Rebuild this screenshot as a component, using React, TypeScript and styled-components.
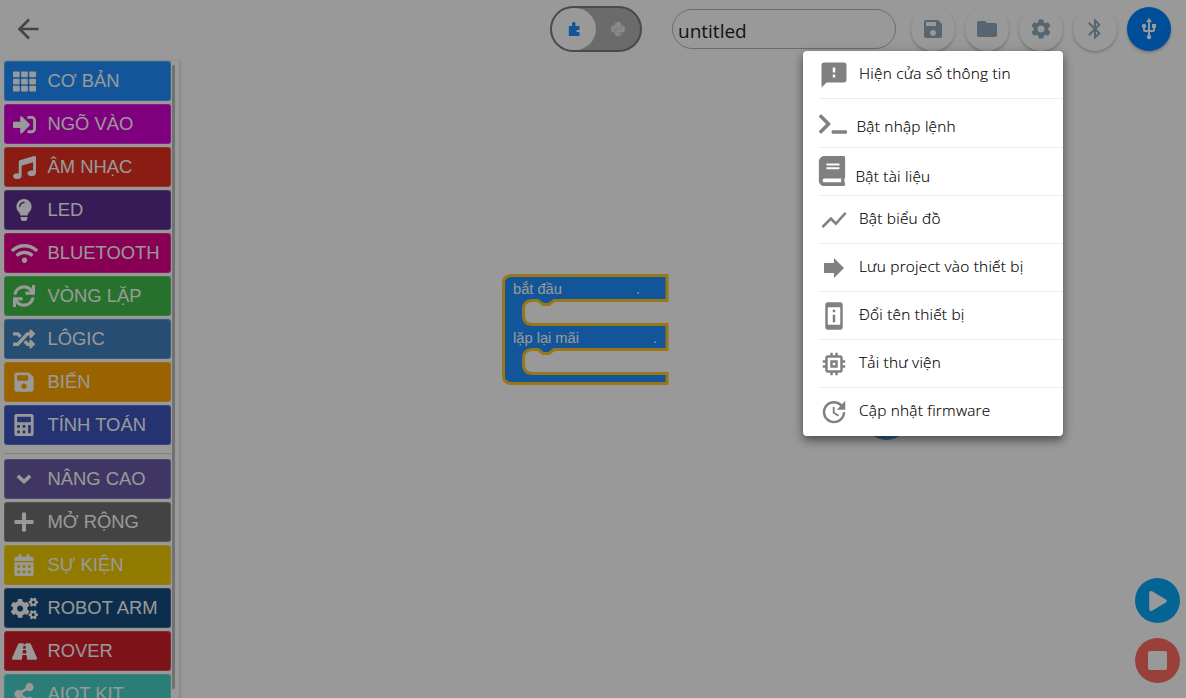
import React from "react";
import styled, { createGlobalStyle } from "styled-components";
import { FaTh, FaSignInAlt, FaMusic, FaLightbulb, FaWifi, FaSync, FaRandom, FaSave, FaCalculator, FaPlus, FaCalendarAlt, FaCogs, FaRoad, FaShareAlt, FaPython, FaTerminal, FaBook, FaPlay } from "react-icons/fa";
import { MdSave, MdFolder, MdSettings, MdBluetooth, MdUsb, MdShowChart, MdForward, MdPermDeviceInformation, MdMemory, MdUpdate } from "react-icons/md";

const Global = createGlobalStyle`
  * { box-sizing: border-box; }
  body { margin: 0; overflow: hidden; background: #fff; }
`;

const Page = styled.div`
  position: relative;
  width: 1186px;
  height: 698px;
  overflow: hidden;
  background: #fff;
  display: flex;
  flex-direction: column;
  font-family: "Liberation Sans", sans-serif;
`;

const TopBar = styled.header`
  height: 61px;
  flex: none;
  display: flex;
  align-items: flex-start;
  padding: 6px 15px 0 14px;
`;

const BackButton = styled.div`
  margin-top: 9px;
  height: 28px;
  color: #747474;
  flex: 1;
  svg { display: block; }
`;

const ModeSwitch = styled.div`
  width: 92px;
  height: 46px;
  border: 2px solid #7c7c7c;
  border-radius: 23px;
  background: #b2b2b2;
  display: flex;
  margin-right: 30px;
  overflow: hidden;
`;

const Mode = styled.div<{ $active?: boolean }>`
  width: 44px;
  height: 42px;
  border-radius: ${(p) => (p.$active ? "21px 22px 22px 21px" : "0")};
  background: ${(p) => (p.$active ? "#fff" : "transparent")};
  color: ${(p) => (p.$active ? "#1e90ff" : "#e6e6e6")};
  display: flex;
  align-items: center;
  justify-content: center;
`;

const NameField = styled.div`
  width: 224px;
  height: 40px;
  margin: 3px 15px 0 0;
  border: 1px solid #9dbdd2;
  border-radius: 20px;
  padding: 3px 0 0 5px;
  font: 400 19px/36px "Open Sans", "Noto Sans", sans-serif;
  color: #222;
`;

const Tools = styled.div`
  display: flex;
  gap: 10px;
  margin-top: 1px;
`;

const RoundButton = styled.div<{ $primary?: boolean }>`
  width: 44px;
  height: 44px;
  border-radius: 50%;
  display: flex;
  align-items: center;
  justify-content: center;
  background: ${(p) => (p.$primary ? "#0080ff" : "#fff")};
  color: ${(p) => (p.$primary ? "#fff" : "#8fa9b9")};
  box-shadow: 0 1.5px 3px rgba(0, 0, 0, 0.26);
`;

const Main = styled.main`
  flex: 1;
  min-height: 0;
  display: flex;
`;

const Sidebar = styled.nav`
  width: 180px;
  display: flex;
  overflow: hidden;
  border-right: 1px solid #e4e4e4;
  box-shadow: 1px 0 3px rgba(0, 0, 0, 0.12);
`;

const CategoryList = styled.div`
  width: 167px;
  margin-left: 4px;
  display: flex;
  flex-direction: column;
  gap: 3px;
`;

const Category = styled.div<{ $color: string }>`
  height: 40px;
  flex: none;
  border-radius: 3px;
  border: 1px solid rgba(255, 255, 255, 0.2);
  background: ${(p) => p.$color};
  color: #fff;
  display: flex;
  align-items: center;
  font-size: 18.4px;
  white-space: nowrap;
`;

const CategoryIcon = styled.span`
  width: 38px;
  display: flex;
  justify-content: center;
  margin-right: 4.5px;
`;

const Divider = styled.div`
  height: 1px;
  flex: none;
  margin: 5px 0 2px;
  background: #d8d8d8;
`;

const Scrollbar = styled.div`
  width: 3px;
  height: 624px;
  margin: 4px 0 0 1px;
  border-radius: 1px;
  background: #bebebe;
`;

const Workspace = styled.section`
  flex: 1;
  position: relative;
`;

const ProgramBlock = styled.svg`
  position: absolute;
  left: 320px;
  top: 211px;
`;

const HiddenBubble = styled.div`
  position: absolute;
  left: 684px;
  top: 334px;
  width: 45px;
  height: 45px;
  border-radius: 50%;
  background: #4ba3d3;
`;

const RunControls = styled.div`
  position: absolute;
  right: 6px;
  top: 517px;
  display: flex;
  flex-direction: column;
  gap: 15px;
`;

const RunButton = styled.div<{ $color: string }>`
  width: 45px;
  height: 45px;
  border-radius: 50%;
  background: ${(p) => p.$color};
  color: #fff;
  display: flex;
  align-items: center;
  justify-content: center;
`;

const StopSquare = styled.span`
  width: 19px;
  height: 19px;
  border-radius: 2px;
  background: #fff;
`;

const Backdrop = styled.div`
  position: absolute;
  inset: 0;
  background: rgba(0, 0, 0, 0.4);
`;

const Menu = styled.div`
  position: absolute;
  left: 803px;
  top: 51px;
  width: 260px;
  height: 385px;
  padding-left: 16px;
  border-radius: 4px;
  background: #fff;
  box-shadow: 0 5px 8px rgba(0, 0, 0, 0.35), 0 2px 12px rgba(0, 0, 0, 0.2);
`;

const MenuItem = styled.div<{ $height: number }>`
  height: ${(p) => p.$height}px;
  display: flex;
  border-bottom: 1px solid #ededed;
  color: #000;
  font: 300 15.4px/20px "Open Sans", "Noto Sans", sans-serif;
  letter-spacing: 0.22px;
  -webkit-text-stroke: 0.15px #000;
  white-space: nowrap;
  &:last-child { border-bottom: 0; }
`;

const MenuIcon = styled.span<{ $width: number; $top: number; $shift?: number }>`
  width: ${(p) => p.$width}px;
  padding-top: ${(p) => p.$top}px;
  flex: none;
  color: #808080;
  svg { display: block; margin-left: ${(p) => p.$shift ?? 0}px; }
`;

const MenuLabel = styled.span<{ $top: number }>`
  padding-top: ${(p) => p.$top}px;
`;

const BackIcon = () => (
  <svg width="28" height="28" viewBox="0 0 28 28" fill="none" stroke="currentColor" strokeWidth="2.600">
    <path d="M24.500 14H5.500M15 4.500 5.500 14l9.500 9.500" />
  </svg>
);

const ChevronIcon = () => (
  <svg width="16" height="10" viewBox="0 0 16 10" fill="none" stroke="currentColor" strokeWidth="3.6">
    <path d="M1.8 1.8 8 7.5l6.2-5.7" />
  </svg>
);

const PuzzleIcon = () => (
  <svg width="12" height="14" viewBox="0 0 12 14" fill="currentColor">
    <path d="M1.500 4H4V1.500Q4 0 5.500 0H6Q7.500 0 7.500 1.500V4H11.500V8H9.500Q8.300 8 8.300 9Q8.300 10 9.500 10H11.500V14H.8V4.700Q.8 4 1.500 4Z" />
  </svg>
);

const NoticeIcon = () => (
  <svg width="30" height="30" viewBox="0 0 24 24" fill="currentColor">
    <path fillRule="evenodd" d="M20 2H4c-1.100 0-2 .9-2 2v18l4-4h14c1.100 0 2-.9 2-2V4c0-1.100-.9-2-2-2ZM13 14h-2v-2.500h2V14Zm0-4h-2V6h2V10Z" />
  </svg>
);

const categories = [
  { label: "CƠ BẢN", color: "#1e90ff", icon: <FaTh size={23} /> },
  { label: "NGÕ VÀO", color: "#d400d4", icon: <FaSignInAlt size={23} /> },
  { label: "ÂM NHẠC", color: "#e63022", icon: <FaMusic size={23} /> },
  { label: "LED", color: "#5c2d91", icon: <FaLightbulb size={22} /> },
  { label: "BLUETOOTH", color: "#e3008c", icon: <FaWifi size={27} /> },
  { label: "VÒNG LẶP", color: "#40bf4a", icon: <FaSync size={22} /> },
  { label: "LÔGIC", color: "#4080bf", icon: <FaRandom size={22} /> },
  { label: "BIẾN", color: "#ffa500", icon: <FaSave size={22} /> },
  { label: "TÍNH TOÁN", color: "#4055bf", icon: <FaCalculator size={22} /> },
];

const advanced = [
  { label: "NÂNG CAO", color: "#6a5ba5", icon: <ChevronIcon /> },
  { label: "MỞ RỘNG", color: "#717171", icon: <FaPlus size={22} /> },
  { label: "SỰ KIỆN", color: "#f0cd00", icon: <FaCalendarAlt size={22} /> },
  { label: "ROBOT ARM", color: "#144b7d", icon: <FaCogs size={27} /> },
  { label: "ROVER", color: "#d01e28", icon: <FaRoad size={25} /> },
  { label: "AIOT KIT", color: "#48d1c6", icon: <FaShareAlt size={22} /> },
];

const menuItems = [
  { label: "Hiện cửa sổ thông tin", icon: <NoticeIcon />, height: 48, top: 9, width: 40, textTop: 13 },
  { label: "Bật nhập lệnh", icon: <FaTerminal size={28} />, height: 49, top: 11, width: 37.5, textTop: 18 },
  { label: "Bật tài liệu", icon: <FaBook size={30} />, height: 48, top: 8, width: 36.5, textTop: 19, shift: -2 },
  { label: "Bật biểu đồ", icon: <MdShowChart size={30} />, height: 48, top: 9, width: 40, textTop: 13 },
  { label: "Lưu project vào thiết bị", icon: <MdForward size={30} />, height: 48, top: 9, width: 40, textTop: 13 },
  { label: "Đổi tên thiết bị", icon: <MdPermDeviceInformation size={30} />, height: 48, top: 9, width: 40, textTop: 13 },
  { label: "Tải thư viện", icon: <MdMemory size={30} />, height: 48, top: 9, width: 40, textTop: 13 },
  { label: "Cập nhật firmware", icon: <MdUpdate size={30} />, height: 48, top: 9, width: 40, textTop: 13 },
];

const renderCategory = (c: { label: string; color: string; icon: React.ReactNode }) => (
  <Category key={c.label} $color={c.color}>
    <CategoryIcon>{c.icon}</CategoryIcon>
    {c.label}
  </Category>
);

export default function App() {
  return (
    <Page>
      <Global />
      <TopBar>
        <BackButton><BackIcon /></BackButton>
        <ModeSwitch>
          <Mode $active><PuzzleIcon /></Mode>
          <Mode><FaPython size={16} /></Mode>
        </ModeSwitch>
        <NameField>untitled</NameField>
        <Tools>
          <RoundButton><MdSave size={24} /></RoundButton>
          <RoundButton><MdFolder size={24} /></RoundButton>
          <RoundButton><MdSettings size={24} /></RoundButton>
          <RoundButton><MdBluetooth size={24} /></RoundButton>
          <RoundButton $primary><MdUsb size={24} /></RoundButton>
        </Tools>
      </TopBar>
      <Main>
        <Sidebar>
          <CategoryList>
            {categories.map(renderCategory)}
            <Divider />
            {advanced.map(renderCategory)}
          </CategoryList>
          <Scrollbar />
        </Sidebar>
        <Workspace>
          <ProgramBlock width="170" height="114" viewBox="500 272 170 114">
            <path
              d="M511 275.500H667V300.500H554L549 304.500H543L538 300.500H532Q523.500 301 523.500 309V316Q523.500 324 532 324.500H667V349.500H554L549 353.500H543L538 349.500H532Q523.500 350 523.500 358V365Q523.500 373 532 373.500H667V383.500H511Q503.500 383 503.500 376V283Q503.500 276 511 275.500Z"
              fill="#1e90ff" stroke="#ffc62b" strokeWidth="3" />
            <g fill="#fff" fontFamily="Liberation Sans, sans-serif" fontSize="14.670">
              <text x="513" y="294">bắt đầu</text>
              <text x="636" y="294">.</text>
              <text x="513" y="343">lặp lại mãi</text>
              <text x="653" y="343">.</text>
            </g>
          </ProgramBlock>
          <HiddenBubble />
          <RunControls>
            <RunButton $color="#07a9f8"><FaPlay size={20} /></RunButton>
            <RunButton $color="#ff6b62"><StopSquare /></RunButton>
          </RunControls>
        </Workspace>
      </Main>
      <Backdrop />
      <Menu>
        {menuItems.map((m) => (
          <MenuItem key={m.label} $height={m.height}>
            <MenuIcon $width={m.width} $top={m.top} $shift={m.shift}>{m.icon}</MenuIcon>
            <MenuLabel $top={m.textTop}>{m.label}</MenuLabel>
          </MenuItem>
        ))}
      </Menu>
    </Page>
  );
}
